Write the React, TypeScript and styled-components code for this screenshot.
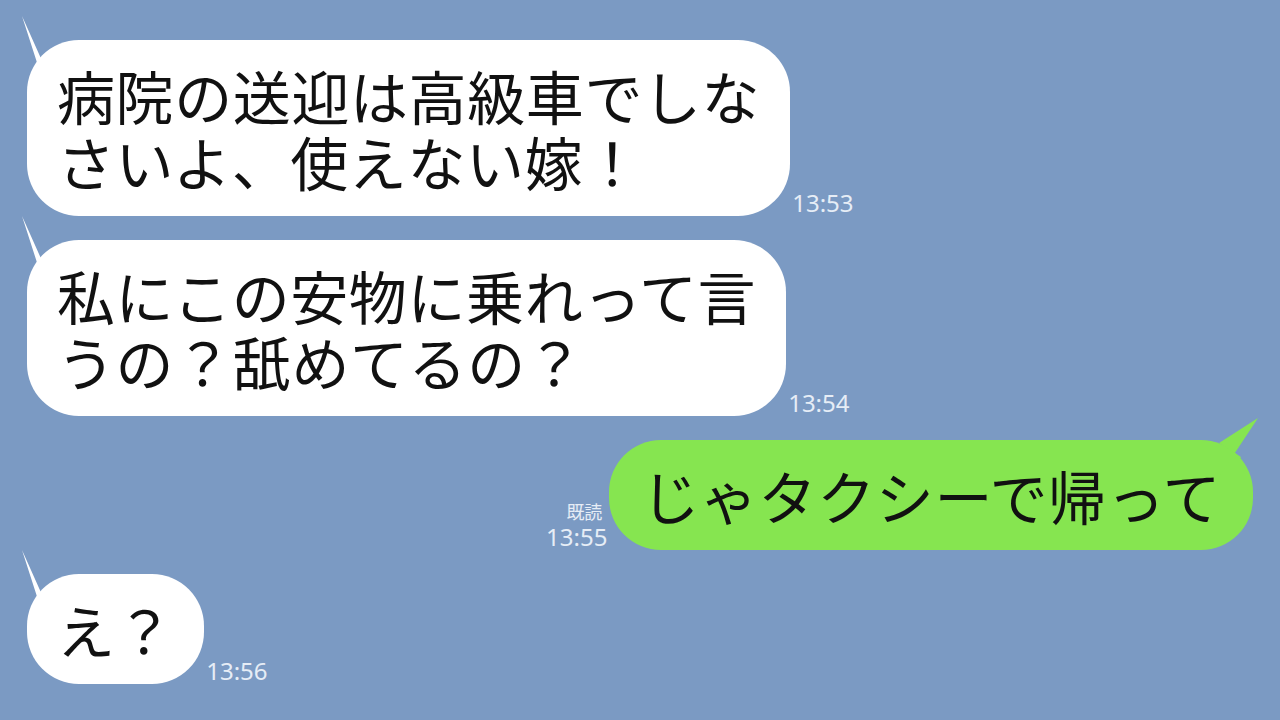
import React from 'react';
import styled, { createGlobalStyle } from 'styled-components';

const GlobalStyle = createGlobalStyle`
  html, body {
    margin: 0;
    padding: 0;
    background: #7b9ac3;
  }
  body {
    font-family: 'Noto Sans CJK JP', 'Noto Sans', sans-serif;
  }
`;

type Side = 'left' | 'right';

interface Message {
  side: Side;
  text: string;
  time: string;
  read?: boolean;
}

const messages: Message[] = [
  { side: 'left', text: '病院の送迎は高級車でしな\nさいよ、使えない嫁！', time: '13:53' },
  { side: 'left', text: '私にこの安物に乗れって言\nうの？舐めてるの？', time: '13:54' },
  { side: 'right', text: 'じゃタクシーで帰って', time: '13:55', read: true },
  { side: 'left', text: 'え？', time: '13:56' },
];

const Tail = ({ side }: { side: Side }) =>
  side === 'left' ? (
    <LeftTail width="50" height="60" viewBox="0 0 50 60">
      <polygon points="1,1 22,48 42,32 40,60 20,60" fill="#ffffff" />
    </LeftTail>
  ) : (
    <RightTail width="50" height="60" viewBox="0 0 50 60">
      <polygon points="49,1 10,26 32,40 20,60 10,60" fill="#86e550" />
    </RightTail>
  );

const App = () => (
  <>
    <GlobalStyle />
    <Chat>
      {messages.map((m, i) => (
        <Row key={i} side={m.side}>
          {m.side === 'right' && (
            <Meta>
              {m.read && <Read>既読</Read>}
              <Time>{m.time}</Time>
            </Meta>
          )}
          <Bubble side={m.side}>
            <Tail side={m.side} />
            <BubbleText>{m.text}</BubbleText>
          </Bubble>
          {m.side === 'left' && (
            <Meta>
              <Time>{m.time}</Time>
            </Meta>
          )}
        </Row>
      ))}
    </Chat>
  </>
);

export default App;

const Chat = styled.div`
  width: 1280px;
  height: 720px;
  box-sizing: border-box;
  padding: 40px 27px 0;
  display: flex;
  flex-direction: column;
  gap: 24px;
  overflow: hidden;
`;

const Row = styled.div<{ side: Side }>`
  display: flex;
  align-items: flex-end;
  justify-content: ${({ side }) => (side === 'left' ? 'flex-start' : 'flex-end')};
  gap: 2px;
`;

const Bubble = styled.div<{ side: Side }>`
  position: relative;
  background: ${({ side }) => (side === 'left' ? '#ffffff' : '#86e550')};
  border-radius: 52px;
  padding: ${({ side }) => (side === 'left' ? '22px 30px 22px 30px' : '22px 32px 22px 32px')};
`;

const BubbleText = styled.div`
  position: relative;
  font-family: 'Noto Sans CJK JP', sans-serif;
  font-size: 58px;
  letter-spacing: 0.6px;
  line-height: 66px;
  color: #111111;
  white-space: pre;
`;

const LeftTail = styled.svg`
  position: absolute;
  left: -6px;
  top: -25px;
`;

const RightTail = styled.svg`
  position: absolute;
  right: -6px;
  top: -23px;
`;

const Meta = styled.div`
  display: flex;
  flex-direction: column;
  align-items: flex-end;
  gap: 3px;
`;

const Read = styled.span`
  font-family: 'Noto Sans CJK JP', sans-serif;
  font-size: 18px;
  line-height: 20px;
  color: #e6edf6;
  margin-right: 5px;
`;

const Time = styled.span`
  font-family: 'Noto Sans', 'Noto Sans CJK JP', sans-serif;
  font-size: 24px;
  line-height: 26px;
  color: #e6edf6;
`;
